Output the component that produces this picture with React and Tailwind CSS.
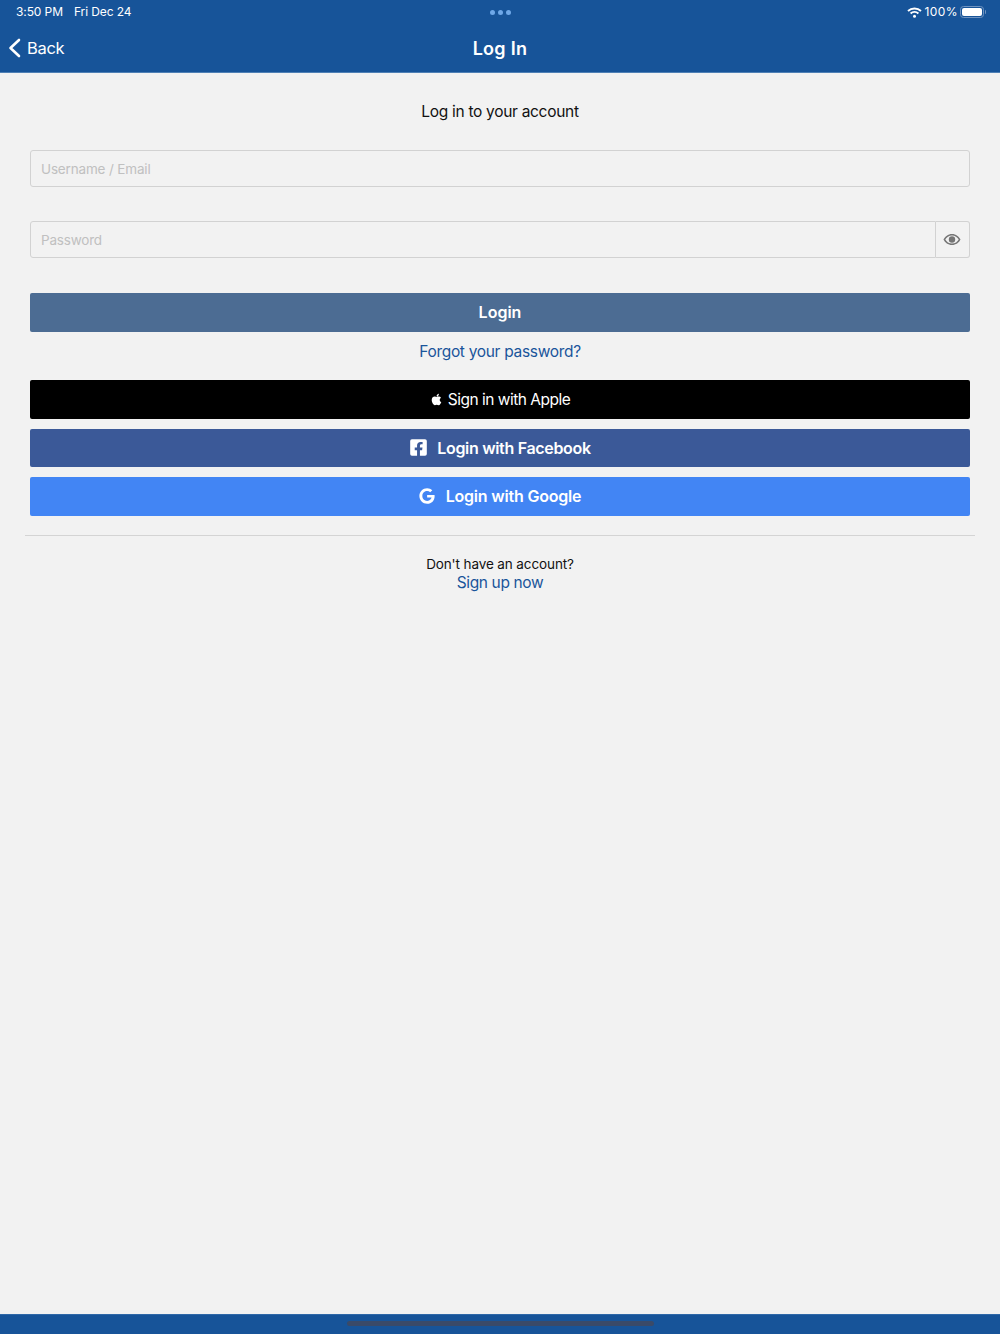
import { FaApple, FaFacebookSquare, FaGoogle } from 'react-icons/fa'

function StatusBar() {
  return (
    <div className="relative flex h-6 items-center justify-between pl-4 pr-[14px] text-[12px] text-white">
      <div className="flex gap-[11px] tracking-[-0.1px]">
        <span>3:50 PM</span>
        <span>Fri Dec 24</span>
      </div>
      <div className="absolute left-[490px] top-[10px] flex gap-[3px]">
        <span className="h-[5px] w-[5px] rounded-full bg-[#6fa8e8]" />
        <span className="h-[5px] w-[5px] rounded-full bg-[#6fa8e8]" />
        <span className="h-[5px] w-[5px] rounded-full bg-[#6fa8e8]" />
      </div>
      <div className="flex items-center">
        <svg width="15" height="11" viewBox="0 0 15 11" fill="none" stroke="white" strokeWidth="1.9">
          <path d="M1 4 C4.6 0.6 10.4 0.6 14 4" />
          <path d="M3.6 6.5 C5.8 4.5 9.2 4.5 11.4 6.5" />
          <circle cx="7.5" cy="9.2" r="1.5" fill="white" stroke="none" />
        </svg>
        <span className="ml-[3px] tracking-[0.4px]">100%</span>
        <div className="ml-[2px] flex items-center">
          <div className="h-[12px] w-[24px] rounded-[3.5px] border border-[#6f93c0] p-[1px]">
            <div className="h-full w-full rounded-[2px] bg-white" />
          </div>
          <div className="ml-[1px] h-[4px] w-[1px] rounded-r bg-[#6f93c0]" />
        </div>
      </div>
    </div>
  )
}

function NavBar() {
  return (
    <div className="relative flex h-[49px] items-center justify-center border-b border-[#4f80b5]">
      <div className="absolute left-[8px] top-[13px] flex items-center gap-[6px] text-white">
        <svg width="13" height="20" viewBox="0 0 13 20" fill="none" stroke="white" strokeWidth="2.6" strokeLinecap="round" strokeLinejoin="round">
          <path d="M11 2 L2.5 10 L11 18" />
        </svg>
        <span className="text-[16.5px] leading-[22px] tracking-[-0.3px]">Back</span>
      </div>
      <h1 className="text-[18px] font-semibold tracking-[0.3px] text-white">Log In</h1>
    </div>
  )
}

function TextInput({ label }) {
  return (
    <div className="flex h-[37px] flex-1 items-center rounded-[3px] border border-[#d2d2d2] px-[10px] pt-[1px] text-[13.5px] tracking-[-0.16px] text-[#c0c0c0]">
      {label}
    </div>
  )
}

function ActionButton({ className, children }) {
  return (
    <div className={`flex items-center justify-center rounded-[2px] text-white ${className}`}>
      {children}
    </div>
  )
}

export default function App() {
  return (
    <div className="flex h-[1334px] flex-col bg-[#f2f2f2] font-['Inter','Liberation_Sans',sans-serif]">
      <header className="bg-[#175499]">
        <StatusBar />
        <NavBar />
      </header>

      <main className="flex-1 px-[30px]">
        <p className="mt-[29px] text-center text-[15.5px] leading-[20px] tracking-[-0.3px] text-[#111]">Log in to your account</p>

        <div className="mt-[28px] flex">
          <TextInput label="Username / Email" />
        </div>

        <div className="mt-[34px] flex">
          <div className="flex h-[37px] flex-1 items-center rounded-l-[3px] border border-[#d2d2d2] px-[10px] pt-[1px] text-[13.5px] tracking-[-0.2px] text-[#c0c0c0]">
            Password
          </div>
          <div className="flex h-[37px] w-[34px] items-center justify-center rounded-r-[3px] border border-l-0 border-[#d2d2d2] pr-[2px]">
            <svg width="18" height="13" viewBox="0 0 18 13">
              <path d="M9 1 C5 1 2 3.5 0.5 6.5 C2 9.5 5 12 9 12 C13 12 16 9.5 17.5 6.5 C16 3.5 13 1 9 1 Z M9 2.4 C12 2.4 14.5 4.2 15.7 6.5 C14.5 8.8 12 10.6 9 10.6 C6 10.6 3.5 8.8 2.3 6.5 C3.5 4.2 6 2.4 9 2.4 Z" fill="#757575" />
              <circle cx="9" cy="6.5" r="3.2" fill="#757575" />
            </svg>
          </div>
        </div>

        <ActionButton className="mt-[35px] h-[39px] bg-[#4c6c93] pb-[1px] text-[16px] font-semibold">Login</ActionButton>

        <p className="mt-[10px] text-center text-[15.5px] leading-[20px] tracking-[-0.31px] text-[#1a559b]">Forgot your password?</p>

        <ActionButton className="mt-[18px] h-[39px] gap-[5px] bg-black text-[15.5px] tracking-[-0.5px]">
          <FaApple size={13} />
          <span>Sign in with Apple</span>
        </ActionButton>

        <ActionButton className="mt-[10px] h-[38px] gap-[9px] bg-[#3b5998] pb-[1px] text-[16px] font-semibold tracking-[-0.32px]">
          <FaFacebookSquare size={19} />
          <span>Login with Facebook</span>
        </ActionButton>

        <ActionButton className="mt-[10px] h-[39px] gap-[11px] bg-[#4285f4] pb-[1px] text-[16px] font-semibold tracking-[-0.2px]">
          <FaGoogle size={16} />
          <span>Login with Google</span>
        </ActionButton>

        <div className="-mx-[5px] mt-[19px] border-t border-[#d4d4d4]" />

        <p className="mt-[19px] text-center text-[13.5px] leading-[18px] tracking-[-0.11px] text-[#111]">Don't have an account?</p>
        <p className="pt-[1px] text-center text-[15.5px] leading-[18px] tracking-[-0.36px] text-[#1a559b]">Sign up now</p>
      </main>

      <footer className="flex h-[20px] justify-center border-t border-[#2f68a8] bg-[#175499] pt-[6px]">
        <div className="h-[5px] w-[307px] rounded-full bg-[#3a4a68]" />
      </footer>
    </div>
  )
}
